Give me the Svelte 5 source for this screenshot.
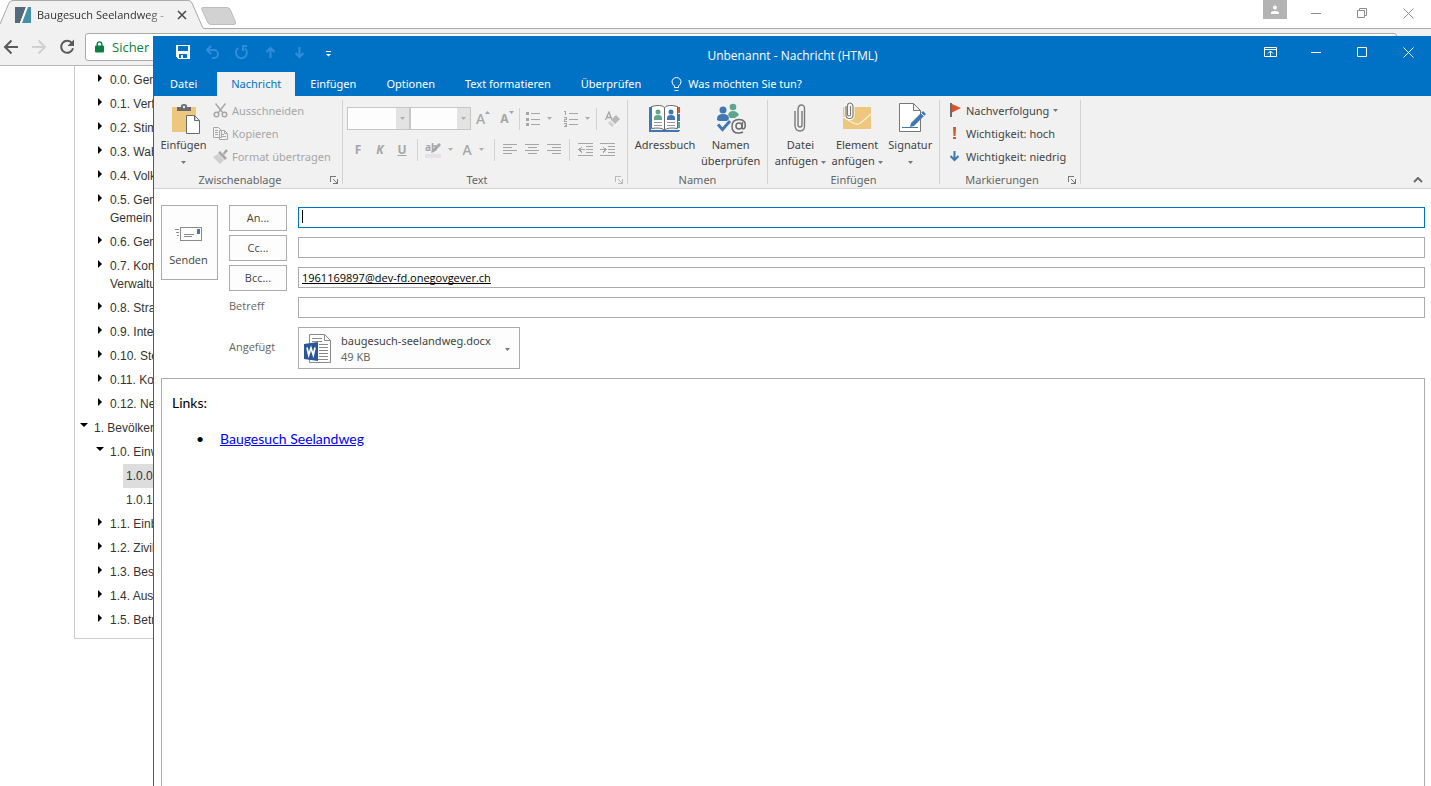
<script>
    const tree = [
        { level: 1, state: 'closed', lines: ['0.0. Gem'] },
        { level: 1, state: 'closed', lines: ['0.1. Verf'] },
        { level: 1, state: 'closed', lines: ['0.2. Stim'] },
        { level: 1, state: 'closed', lines: ['0.3. Wahl'] },
        { level: 1, state: 'closed', lines: ['0.4. Volk'] },
        { level: 1, state: 'closed', lines: ['0.5. Gem', 'Gemein'] },
        { level: 1, state: 'closed', lines: ['0.6. Gem'] },
        { level: 1, state: 'closed', lines: ['0.7. Kom', 'Verwaltu'] },
        { level: 1, state: 'closed', lines: ['0.8. Stra'] },
        { level: 1, state: 'closed', lines: ['0.9. Inte'] },
        { level: 1, state: 'closed', lines: ['0.10. Ste'] },
        { level: 1, state: 'closed', lines: ['0.11. Ko'] },
        { level: 1, state: 'closed', lines: ['0.12. Ne'] },
        { level: 0, state: 'open', lines: ['1. Bevölker'] },
        { level: 1, state: 'open', lines: ['1.0. Einw'] },
        { level: 2, state: 'active', lines: ['1.0.0'] },
        { level: 2, state: '', lines: ['1.0.1'] },
        { level: 1, state: 'closed', lines: ['1.1. Einb'] },
        { level: 1, state: 'closed', lines: ['1.2. Zivil'] },
        { level: 1, state: 'closed', lines: ['1.3. Bes'] },
        { level: 1, state: 'closed', lines: ['1.4. Aus'] },
        { level: 1, state: 'closed', lines: ['1.5. Betr'] }
    ]

    const tabs = ['Einfügen', 'Optionen', 'Text formatieren', 'Überprüfen']

    let to = $state('')
    let cc = $state('')
    let bcc = $state('1961169897@dev-fd.onegovgever.ch')
    let subject = $state('')
</script>

{#snippet arrow()}
    <svg class="arrow" width="5" height="3" viewBox="0 0 5 3"><path d="M0 0h5L2.5 3z" fill="currentColor" /></svg>
{/snippet}

{#snippet launcher(label)}
    <button class="launcher" aria-label={label}>
        <svg width="8" height="8" viewBox="0 0 8 8" fill="none" stroke="currentColor" shape-rendering="crispEdges">
            <path d="M0.5 6V0.5H6M3 3l4 4M7.5 3v4.5H3" />
        </svg>
    </button>
{/snippet}

{#snippet lines(d)}
    <svg width="15" height="14" viewBox="0 0 15 14" fill="none" stroke="#a6a6a6" shape-rendering="crispEdges">
        <path {d} />
    </svg>
{/snippet}

<div class="browser">
    <div class="tabstrip">
        <div class="chrome-tab">
            <svg class="shape" width="204" height="29" viewBox="0 0 204 29">
                <path d="M0 29V24L9 3Q10 0.5 13 0.5H188Q191 0.5 192 3L202 26Q203 28.5 204 28.5V29z" fill="#f2f1f1" />
                <path d="M0 24L9 3Q10 0.5 13 0.5H188Q191 0.5 192 3L202 26Q203 28.5 204 28.5" fill="none" stroke="#a9a9a9" />
            </svg>
            <svg class="favicon" width="16" height="16" viewBox="0 0 16 16">
                <path d="M0 0H11L5 16H0z" fill="#56697b" />
                <path d="M12 0H16V16H6z" fill="#4390ad" />
                <path d="M11 0h2L7 16H5z" fill="#fff" />
            </svg>
            <span class="tab-title">Baugesuch Seelandweg -</span>
            <button aria-label="Tab schliessen">
                <svg width="10" height="10" viewBox="0 0 10 10" stroke="#4a4a4a" stroke-width="1.6"><path d="M1 1l8 8M9 1L1 9" /></svg>
            </button>
        </div>
        <button class="new-tab" aria-label="Neuer Tab">
            <svg width="36" height="18" viewBox="0 0 36 18"><path d="M2 0.5H26Q28 0.5 29 2L34.5 15Q35 17.5 33 17.5H10Q8 17.5 7 16L1 3Q0 0.5 2 0.5z" fill="#d2d2d2" stroke="#bdbdbd" /></svg>
        </button>
        <div class="chrome-controls">
            <button class="profile" aria-label="Profil">
                <svg width="10" height="10" viewBox="0 0 10 10" fill="#fff"><circle cx="5" cy="2.5" r="2" /><path d="M1 9V8Q1 6 5 6T9 8V9z" /></svg>
            </button>
            <button aria-label="Minimieren"><svg width="11" height="11" viewBox="0 0 11 11" stroke="#8c8c8c"><path d="M0 5.5h10" /></svg></button>
            <button aria-label="Verkleinern">
                <svg width="11" height="11" viewBox="0 0 11 11" fill="none" stroke="#8c8c8c"><path d="M0.5 2.5h7v7h-7zM2.5 2V0.5h7v7H8" /></svg>
            </button>
            <button aria-label="Schliessen"><svg width="11" height="11" viewBox="0 0 11 11" stroke="#8c8c8c"><path d="M0.5 0.5l10 10M10.5 0.5l-10 10" /></svg></button>
        </div>
    </div>

    <div class="toolbar">
        <button aria-label="Zurück">
            <svg width="16" height="16" viewBox="0 0 16 16" fill="none" stroke="#5a5a5a" stroke-width="2"><path d="M15 8H3M8.5 1.5L2 8l6.500 6.500" /></svg>
        </button>
        <button aria-label="Vorwärts">
            <svg width="16" height="16" viewBox="0 0 16 16" fill="none" stroke="#d0d0d0" stroke-width="2"><path d="M1 8H13M7.500 1.500L14 8l-6.500 6.500" /></svg>
        </button>
        <button aria-label="Neu laden">
            <svg width="16" height="16" viewBox="0 0 16 16"><path d="M13 4.200A6 6 0 1 0 14 9.200" fill="none" stroke="#5a5a5a" stroke-width="2" /><path d="M15 0.500V7H8.500z" fill="#5a5a5a" /></svg>
        </button>
        <label class="address">
            <svg width="9" height="12" viewBox="0 0 9 12"><path d="M2.200 5V3.200a2.300 2.300 0 0 1 4.600 0V5" fill="none" stroke="#0b8043" stroke-width="1.400" /><rect y="4.500" width="9" height="7" rx="1" fill="#0b8043" /></svg>
            <span>Sicher</span>
            <input type="text" aria-label="Adresse" />
        </label>
    </div>

    <div class="page">
        <ul class="tree">
            {#each tree as item}
                <li class="level{item.level} {item.state}">
                    {#if item.state === 'closed'}
                        <svg class="marker" width="6" height="8" viewBox="0 0 6 8"><path d="M1 0l4 4-4 4z" /></svg>
                    {:else if item.state === 'open'}
                        <svg class="marker" width="8" height="6" viewBox="0 0 8 6"><path d="M0 1h8L4 5z" /></svg>
                    {/if}
                    <a href="#position">{#each item.lines as line}<span>{line}</span>{/each}</a>
                </li>
            {/each}
        </ul>
    </div>
</div>

<main class="outlook">
    <header class="titlebar">
        <div class="quick">
            <button aria-label="Speichern">
                <svg width="15" height="15" viewBox="0 0 15 15" shape-rendering="crispEdges"><path d="M0 0H14V14H2L0 12zM2 1V6H12V1zM3 9V13H5V10H7V13H11V9z" fill="#fff" fill-rule="evenodd" /></svg>
            </button>
            <button disabled aria-label="Rückgängig">
                <svg width="15" height="15" viewBox="0 0 15 15" fill="none" stroke="#2f8dda" stroke-width="2"><path d="M6 1L2 5l4 4M2 5H9a4 4 0 0 1 0 8H7" /></svg>
            </button>
            <button disabled aria-label="Wiederholen">
                <svg width="15" height="15" viewBox="0 0 15 15" fill="none" stroke="#2f8dda" stroke-width="2"><path d="M4.500 3A5.500 5.500 0 1 0 11 3.500M8 1h5M9 1v5" /></svg>
            </button>
            <button disabled aria-label="Vorheriges Element">
                <svg width="15" height="15" viewBox="0 0 15 15" fill="none" stroke="#2f8dda" stroke-width="2"><path d="M7.500 13V3M3.500 7l4-4 4 4" /></svg>
            </button>
            <button disabled aria-label="Nächstes Element">
                <svg width="15" height="15" viewBox="0 0 15 15" fill="none" stroke="#2f8dda" stroke-width="2"><path d="M7.500 2V12M3.500 8l4 4 4-4" /></svg>
            </button>
            <button aria-label="Schnellzugriff anpassen">
                <svg width="15" height="15" viewBox="0 0 15 15" fill="#fff"><path d="M5 6h5v1H5zM5 9h5L7.500 11.500z" /></svg>
            </button>
        </div>
        <h1>Unbenannt - Nachricht (HTML)</h1>
        <div class="controls">
            <button aria-label="Menüband-Anzeigeoptionen">
                <svg width="13" height="11" viewBox="0 0 13 11" fill="none" stroke="#fff"><path d="M0.500 0.500h12v9h-12zM0 2.500h13M6.500 9V4M4 6.500l2.500-2.500L9 6.500" /></svg>
            </button>
            <button aria-label="Minimieren"><svg width="11" height="11" viewBox="0 0 11 11" stroke="#fff"><path d="M0 5.500h10" /></svg></button>
            <button aria-label="Maximieren"><svg width="11" height="11" viewBox="0 0 11 11" fill="none" stroke="#fff"><path d="M0.500 0.500h9v9h-9z" /></svg></button>
            <button aria-label="Schliessen"><svg width="11" height="11" viewBox="0 0 11 11" stroke="#fff"><path d="M0.500 0.500l10 10M10.500 0.500l-10 10" /></svg></button>
        </div>
    </header>

    <nav class="tabs">
        <button class="file">Datei</button>
        <button class="selected">Nachricht</button>
        {#each tabs as tab}
            <button>{tab}</button>
        {/each}
        <button class="tell-me">
            <svg width="11" height="15" viewBox="0 0 11 15" fill="none" stroke="#fff"><path d="M3.500 10.500V9Q1 7 1 5a4.500 4.500 0 0 1 9 0Q10 7 7.500 9v1.500zM3.500 13.500h4" /></svg>
            Was möchten Sie tun?
        </button>
    </nav>

    <div class="ribbon">
        <section class="group clipboard">
            <div class="group-body">
                <button class="big">
                    <svg width="32" height="32" viewBox="0 0 32 32">
                        <path d="M4 5h24v25H4z" fill="#edc77d" />
                        <path d="M9 9V5h4V4q0-2 3-2t3 2v1h4v4z" fill="#6b6b6b" />
                        <circle cx="16" cy="5" r="1.200" fill="#f1f1f1" />
                        <path d="M18.500 13.500h8l5 5v13h-13zM26.500 13.500v5h5" fill="#fff" stroke="#6b6b6b" />
                    </svg>
                    <span>Einfügen</span>
                    <span>{@render arrow()}</span>
                </button>
                <div class="stack disabled">
                    <button disabled>
                        <svg width="15" height="15" viewBox="0 0 15 15" fill="none" stroke="#a8a8a8" stroke-width="1.500"><path d="M2.500 0.500l7.500 9.500M12.500 0.500L5 10" /><circle cx="3.500" cy="11.500" r="2.300" /><circle cx="11.500" cy="11.500" r="2.300" /></svg>
                        Ausschneiden
                    </button>
                    <button disabled>
                        <svg width="15" height="15" viewBox="0 0 15 15" fill="#f1f1f1" stroke="#a8a8a8"><path d="M0.500 1.500h5l3 3v7h-8zM2 4.500h3M2 6.500h3M2 8.500h3M6.500 4.500h5l3 3v6h-8zM11.500 4.500v3h3M8 8.500h3M8 10.500h5" /></svg>
                        Kopieren
                    </button>
                    <button disabled>
                        <svg width="15" height="15" viewBox="0 0 15 15"><path d="M0 8l5-3 6 6-4 4z" fill="#cfcfcf" /><path d="M5 4l2-2 7 7-2 2zM10 4l3-4 2 2-4 4z" fill="#a8a8a8" /></svg>
                        Format übertragen
                    </button>
                </div>
            </div>
            <footer><h2>Zwischenablage</h2>{@render launcher('Zwischenablage öffnen')}</footer>
        </section>
        <hr />

        <section class="group text">
            <div class="group-body format">
                <div class="tools">
                    <span class="combo font-name"><select disabled aria-label="Schriftart"></select><i>{@render arrow()}</i></span>
                    <span class="combo"><select disabled aria-label="Schriftgrad"></select><i>{@render arrow()}</i></span>
                    <button disabled class="wide" aria-label="Schriftgrad vergrössern"><b class="large">A</b><svg class="raised" width="5" height="3" viewBox="0 0 5 3" fill="#a6a6a6"><path d="M0 3h5L2.500 0z" /></svg></button>
                    <button disabled class="wide" aria-label="Schriftgrad verkleinern"><b>A</b><svg class="raised" width="5" height="3" viewBox="0 0 5 3" fill="#a6a6a6"><path d="M0 0h5L2.500 3z" /></svg></button>
                    <hr />
                    <button disabled class="split" aria-label="Aufzählungszeichen">
                        <svg width="14" height="14" viewBox="0 0 14 14" stroke="#a6a6a6" shape-rendering="crispEdges"><path d="M5 1.500h9M5 7.500h9M5 12.500h9" /><path d="M0 1.500h3M0 7.500h3M0 12.500h3" stroke-width="3" /></svg>
                        {@render arrow()}
                    </button>
                    <button disabled class="split" aria-label="Nummerierung">
                        <svg width="14" height="16" viewBox="0 0 14 16" fill="none" stroke="#a6a6a6" shape-rendering="crispEdges"><path d="M5 2.500h9M5 8.500h9M5 13.500h9M0 0.500h1.500V4M0 6.500h2.500v2h-2v2H3M0 12.500h2.500v3H0M1 14h2" /></svg>
                        {@render arrow()}
                    </button>
                    <hr />
                    <button disabled class="clear" aria-label="Formatierung löschen">
                        <svg width="15" height="16" viewBox="0 0 15 16" fill="none"><path d="M0.500 9L4 1l3 8M2 6.500h4" stroke="#a6a6a6" stroke-width="1.300" /><path d="M11 4l4 4-5 5-4-4z" fill="#b8b8b8" /><path d="M5 10l4 4-2 2-4-4z" fill="#cfcfcf" /></svg>
                    </button>
                </div>
                <div class="tools second">
                    <button disabled class="letter"><b>F</b></button>
                    <button disabled class="letter"><b><em>K</em></b></button>
                    <button disabled class="letter"><b><u>U</u></b></button>
                    <hr />
                    <button disabled class="split" aria-label="Texthervorhebungsfarbe">
                        <span class="marker-icon">ab<svg width="16" height="16" viewBox="0 0 16 16"><path d="M14 1l2 2-7 7-3 1 1-3z" fill="#a6a6a6" /><path d="M0 12h16v4H0z" fill="#e6e0ea" /></svg></span>
                        {@render arrow()}
                    </button>
                    <button disabled class="split" aria-label="Schriftfarbe"><b class="large">A</b>{@render arrow()}</button>
                    <hr />
                    <button disabled class="letter" aria-label="Linksbündig">{@render lines('M0 1.5h14M0 4.5h9M0 7.5h14M0 10.5h9')}</button>
                    <button disabled class="letter" aria-label="Zentriert">{@render lines('M0 1.5h14M3 4.5h9M0 7.5h14M3 10.5h9')}</button>
                    <button disabled class="letter" aria-label="Rechtsbündig">{@render lines('M0 1.5h14M5 4.5h9M0 7.5h14M5 10.5h9')}</button>
                    <hr />
                    <button disabled class="letter" aria-label="Einzug verkleinern">{@render lines('M0 0.5h15M8 3.5h7M8 6.5h7M8 9.5h7M0 12.5h15M1 6.5h6M4 4L1 6.5l3 3')}</button>
                    <button disabled class="letter" aria-label="Einzug vergrössern">{@render lines('M0 0.5h15M8 3.5h7M8 6.5h7M8 9.5h7M0 12.5h15M0 6.5h6M3 4l3 2.5L3 9.500')}</button>
                </div>
            </div>
            <footer class="faded"><h2>Text</h2>{@render launcher('Text öffnen')}</footer>
        </section>
        <hr />

        <section class="group names">
            <div class="group-body">
                <button class="big">
                    <svg width="32" height="32" viewBox="0 0 32 32">
                        <path d="M0 5h2v23h29v1H0zM0 28h30v2H0z" fill="#3f78b4" />
                        <path d="M28 5h3v6h-3z" fill="#d9532c" /><path d="M28 12h3v7h-3z" fill="#3f78b4" /><path d="M28 20h3v6h-3z" fill="#5fa58c" />
                        <path d="M2.500 4.500Q12 2 15.500 5.500Q19 2 28.500 4.500V26.500Q19 25 15.500 28Q12 25 2.500 26.500zM15.500 5.500V28" fill="#fff" stroke="#6b6b6b" />
                        <path d="M5 20.500h8M5 23.500h8M18 20.500h8M18 23.500h8" stroke="#9a9a9a" />
                        <circle cx="9" cy="10" r="2.500" fill="#5fa58c" /><path d="M5 18v-2q0-3 4-3t4 3v2z" fill="#5fa58c" />
                        <circle cx="22" cy="10" r="2.500" fill="#3f78b4" /><path d="M18 18v-2q0-3 4-3t4 3v2z" fill="#3f78b4" />
                    </svg>
                    <span>Adressbuch</span>
                </button>
                <button class="big">
                    <svg width="32" height="32" viewBox="0 0 32 32">
                        <circle cx="18" cy="5" r="3.300" fill="#5fa58c" /><path d="M13 13q1-4 5-4t6 4l-4 3h-5z" fill="#5fa58c" />
                        <circle cx="8" cy="8" r="3.500" fill="#3f78b4" /><path d="M2 18v-1q0-5 6-5t6 5l-2 2H4z" fill="#3f78b4" />
                        <path d="M3 22.500l4.500 5L15 19" fill="none" stroke="#3f78b4" stroke-width="3" />
                        <circle cx="24" cy="24" r="3" fill="none" stroke="#6b6b6b" stroke-width="1.500" />
                        <path d="M27.500 20l-0.500 6q1 2 3-0.500 1.500-8-6-8-7 0-7 7t7 6.500q2 0 4-1" fill="none" stroke="#6b6b6b" stroke-width="1.500" />
                    </svg>
                    <span>Namen</span>
                    <span>überprüfen</span>
                </button>
            </div>
            <footer><h2>Namen</h2></footer>
        </section>
        <hr />

        <section class="group insert">
            <div class="group-body">
                <button class="big">
                    <svg width="32" height="32" viewBox="0 0 32 32" fill="none" stroke="#7a7a7a" stroke-width="1.400"><path d="M18 9v14q0 2-2 2t-2-2V8q0-5 3.500-5T20.500 8v16q0 5-4.500 5t-5-5V9" /></svg>
                    <span>Datei</span>
                    <span>anfügen {@render arrow()}</span>
                </button>
                <button class="big">
                    <svg width="32" height="32" viewBox="0 0 32 32" fill="none"><path d="M2 5h28v22H2z" fill="#edc77d" /><path d="M2 15l11 6.500q3 1.500 6 0L30 12" stroke="#faf0dc" stroke-width="1.300" /><path d="M9.500 4v8.500q0 1.500-1.500 1.500t-1.500-1.500V4Q6.500 1 9 1t3 3v9q0 3.500-3.500 3.500T5 13V4" stroke="#fff" stroke-width="3" /><path d="M9.500 4v8.500q0 1.500-1.500 1.500t-1.500-1.500V4Q6.500 1 9 1t3 3v9q0 3.500-3.500 3.500T5 13V4" stroke="#7a7a7a" stroke-width="1.200" /></svg>
                    <span>Element</span>
                    <span>anfügen {@render arrow()}</span>
                </button>
                <button class="big">
                    <svg width="32" height="32" viewBox="0 0 32 32"><path d="M5.500 1.500h14l7 7v21h-21zM19.500 1.500v7h7" fill="#fff" stroke="#777" /><path d="M8 25.500h16" stroke="#3f78b4" /><path d="M29 9l3 3-12 12-4 1 1-4z" fill="#3f78b4" /><path d="M27 11l3 3" stroke="#fff" /></svg>
                    <span>Signatur</span>
                    <span>{@render arrow()}</span>
                </button>
            </div>
            <footer><h2>Einfügen</h2></footer>
        </section>
        <hr />

        <section class="group marks">
            <div class="group-body">
                <div class="stack">
                    <button>
                        <svg width="13" height="15" viewBox="0 0 13 15"><path d="M1 0h2v14H1z" fill="#6b6b6b" /><path d="M3 1l9 4-9 4.500z" fill="#d9532c" /></svg>
                        Nachverfolgung {@render arrow()}
                    </button>
                    <button>
                        <svg width="13" height="15" viewBox="0 0 13 15" fill="#d9532c"><path d="M4 1h3L6.500 10h-2zM4 11h3v2H4z" /></svg>
                        Wichtigkeit: hoch
                    </button>
                    <button>
                        <svg width="13" height="15" viewBox="0 0 13 15" fill="none" stroke="#3f78b4" stroke-width="2"><path d="M5.500 2v9M1.500 7l4 4 4-4" /></svg>
                        Wichtigkeit: niedrig
                    </button>
                </div>
            </div>
            <footer><h2>Markierungen</h2>{@render launcher('Markierungen öffnen')}</footer>
        </section>
        <hr />

        <button class="collapse" aria-label="Menüband reduzieren">
            <svg width="10" height="6" viewBox="0 0 10 6" fill="none" stroke="#6b6b6b" stroke-width="2"><path d="M1 5l4-4 4 4" /></svg>
        </button>
    </div>

    <form class="envelope">
        <button type="button" class="send">
            <svg width="28" height="16" viewBox="0 0 28 16" fill="none" stroke="#8a8a8a" shape-rendering="crispEdges">
                <path d="M5.500 1.500h21v13h-21zM0 3.500h4M1 6.500h3M2 9.500h2M9 8.500h10M9 10.500h8" /><path d="M22 3h3v5h-3z" fill="#3f78b4" stroke="none" />
            </svg>
            Senden
        </button>
        <div class="fields">
            <button type="button">An...</button>
            <div class="entry">
                <input class="focused" type="text" aria-label="An" bind:value={to} />
                <span class="caret"></span>
            </div>
            <button type="button">Cc...</button>
            <div class="entry"><input type="text" aria-label="Cc" bind:value={cc} /></div>
            <button type="button">Bcc...</button>
            <div class="entry"><input class="recipient" type="text" aria-label="Bcc" bind:value={bcc} /></div>
            <label for="subject">Betreff</label>
            <div class="entry"><input id="subject" type="text" bind:value={subject} /></div>
            <span class="attached">Angefügt</span>
            <button type="button" class="attachment">
                <svg width="28" height="32" viewBox="0 0 28 32">
                    <path d="M5.500 1.500h15l6 6v22h-21zM20.500 1.500v6h6" fill="#fff" stroke="#8a8a8a" />
                    <path d="M8 5.500h10M8 8.500h10M15 11.500h9M15 14.500h9M15 17.500h9M15 20.500h9M15 23.500h9M8 26.500h16" stroke="#8a8a8a" />
                    <path d="M0 11l14-2v19L0 26z" fill="#2b579a" />
                    <path d="M3 14.500l1.700 7.500 2.300-7 2.300 7 1.700-7.500" fill="none" stroke="#fff" stroke-width="1.700" />
                </svg>
                <span class="file-info"><span>baugesuch-seelandweg.docx</span><small>49 KB</small></span>
                {@render arrow()}
            </button>
        </div>
    </form>

    <article class="message">
        <p>Links:</p>
        <ul>
            <li><a href="#baugesuch">Baugesuch Seelandweg</a></li>
        </ul>
    </article>
</main>

<style>
    :global(body) {
        margin: 0;
        overflow: hidden;
        background: #fff;
        font: 12px/16px "Open Sans", "Noto Sans", sans-serif;
        color: #444;
    }

    button {
        padding: 0;
        border: 0;
        background: none;
        font: inherit;
        color: inherit;
        display: flex;
        align-items: center;
        justify-content: center;
        white-space: nowrap;
    }

    svg {
        flex: none;
        display: block;
    }

    h1, h2 {
        margin: 0;
        font: inherit;
    }

    input {
        box-sizing: border-box;
        font: inherit;
    }

    /* browser behind the mail window */
    .browser {
        height: 100vh;
        overflow: hidden;
    }

    .tabstrip {
        display: flex;
        height: 28px;
        border-bottom: 1px solid #a9a9a9;
    }

    .chrome-tab {
        position: relative;
        width: 204px;
        height: 29px;
        display: flex;
        align-items: center;
        gap: 6px;
        padding-left: 15px;
        box-sizing: border-box;
        color: #333;
    }

    .shape {
        position: absolute;
        left: 0;
        top: 0;
    }

    .favicon, .tab-title, .chrome-tab button {
        position: relative;
    }

    .tab-title {
        width: 134px;
        font-size: 11px;
        white-space: nowrap;
        mask-image: linear-gradient(to right, #000 110px, transparent 140px);
    }

    .new-tab {
        align-self: center;
        margin-left: -3px;
        padding-top: 3px;
    }

    .chrome-controls {
        margin-left: auto;
        display: flex;
    }

    .chrome-controls button {
        width: 46px;
        height: 26px;
    }

    .chrome-controls .profile {
        width: 24px;
        height: 19px;
        margin-right: 6px;
        background: #b3b3b3;
    }

    .toolbar {
        display: flex;
        align-items: center;
        gap: 12px;
        height: 36px;
        padding: 0 34px 0 3px;
        background: #f2f1f1;
        border-bottom: 1px solid #b6b6b6;
    }

    .address {
        flex: 1;
        display: flex;
        align-items: center;
        gap: 8px;
        height: 26px;
        margin-left: -2px;
        padding-left: 9px;
        border: 1px solid #a9a9a9;
        border-radius: 3px;
        background: #fff;
        color: #0b8043;
        font-size: 13px;
    }

    .address input {
        flex: 1;
        border: 0;
        outline: 0;
    }

    .page {
        padding-left: 74px;
        font: 12px/18px "Liberation Sans", Arial, sans-serif;
    }

    .tree {
        list-style: none;
        width: 240px;
        margin: 0;
        padding: 2px 0 6px;
        border: 1px solid #ccc;
        border-top: 0;
    }

    .tree li {
        position: relative;
        padding: 3px;
    }

    .tree a {
        color: #333;
        text-decoration: none;
    }

    .tree span {
        display: block;
    }

    .level0 {
        margin-left: 16px;
    }

    .level1 {
        margin-left: 32px;
    }

    .level2 {
        margin-left: 48px;
    }

    .active {
        background: #ddd;
    }

    .marker {
        position: absolute;
        left: -11px;
        top: 6px;
    }

    .closed .marker {
        left: -10px;
    }

    /* mail window */
    .outlook {
        position: absolute;
        top: 36px;
        left: 153px;
        right: 0;
        bottom: 0;
        display: flex;
        flex-direction: column;
        border-left: 1px solid #0072c6;
        background: #fff;
    }

    .titlebar {
        display: grid;
        grid-template-columns: 1fr auto 1fr;
        background: #0072c6;
        color: #fff;
        height: 36px;
    }

    .titlebar h1 {
        padding-top: 12px;
    }

    .quick {
        display: flex;
        padding-left: 15px;
    }

    .quick button {
        width: 29px;
        height: 32px;
    }

    .controls {
        display: flex;
        justify-content: flex-end;
    }

    .controls button {
        width: 46px;
        height: 32px;
    }

    .tabs, .ribbon, .attachment {
        font-family: "Noto Sans", "Open Sans", sans-serif;
        font-size: 11px;
    }

    .tabs {
        display: flex;
        height: 24px;
        background: #0072c6;
        color: #fff;
    }

    .tabs button {
        padding: 0 15px;
    }

    .tabs .file {
        padding: 0 20px 0 16px;
    }

    .tabs .selected {
        padding: 0 14px;
        background: #f1f1f1;
        color: #0072c6;
    }

    .tabs .tell-me {
        gap: 6px;
    }

    .ribbon {
        display: flex;
        background: #f1f1f1;
        border-bottom: 1px solid #d2d2d2;
    }

    .ribbon hr {
        flex: none;
        width: 1px;
        margin: 4px 0;
        border: 0;
        background: #d2d2d2;
    }

    .group {
        flex: none;
        display: flex;
        flex-direction: column;
    }

    .clipboard {
        width: 188px;
    }

    .text {
        width: 284px;
    }

    .names {
        width: 139px;
    }

    .insert {
        width: 171px;
    }

    .marks {
        width: 140px;
    }

    .group-body {
        display: flex;
        height: 76px;
    }

    .group footer {
        display: flex;
        height: 16px;
        color: #666;
    }

    .group h2 {
        flex: 1;
        text-align: center;
    }

    .launcher {
        width: 16px;
        color: #777;
    }

    .faded .launcher {
        color: #b8b8b8;
    }

    .arrow {
        display: inline-block;
        vertical-align: middle;
        color: #777;
    }

    .big {
        flex: 1 1 auto;
        flex-direction: column;
        justify-content: flex-start;
        padding-top: 6px;
        align-self: flex-start;
    }

    .big > svg {
        margin-bottom: 3px;
    }

    .names .group-body, .insert .group-body {
        padding: 0 4px;
    }

    .clipboard .big {
        flex: none;
        width: 59px;
    }

    .stack {
        display: flex;
        flex-direction: column;
        padding-top: 3px;
    }

    .stack button {
        height: 23px;
        gap: 4px;
        justify-content: flex-start;
    }

    .marks .stack {
        padding-left: 9px;
    }

    .disabled {
        color: #a6a6a6;
    }

    .format {
        flex-direction: column;
        gap: 8px;
        padding: 11px 0 0 4px;
        box-sizing: border-box;
    }

    .tools {
        display: flex;
        align-items: center;
        height: 23px;
        color: #a6a6a6;
    }

    .tools hr {
        height: 22px;
        margin: 0;
    }

    .second hr {
        margin: 0 4px;
    }

    .tools .arrow {
        color: #b0b0b0;
    }

    .tools b {
        font-size: 12px;
    }

    .tools .large {
        font-size: 14px;
        font-weight: 500;
    }

    .combo {
        display: flex;
        width: 61px;
        height: 23px;
        box-sizing: border-box;
        border: 1px solid #c6c6c6;
        background: #fdfdfd;
    }

    .font-name {
        width: 63px;
    }

    .combo select {
        flex: 1;
        min-width: 0;
        appearance: none;
        border: 0;
        background: none;
    }

    .combo i {
        display: flex;
        align-items: center;
        justify-content: center;
        width: 13px;
        background: #e3e3e3;
    }

    .wide {
        width: 24px;
    }

    .clear {
        width: 30px;
    }

    .split {
        width: 38px;
        gap: 7px;
    }

    .second .split {
        width: 34px;
    }

    .letter {
        width: 22px;
    }

    .raised {
        align-self: flex-start;
    }

    .marker-icon {
        position: relative;
        width: 16px;
        height: 16px;
        font-weight: bold;
        font-size: 10px;
        line-height: 10px;
        text-align: left;
    }

    .marker-icon svg {
        position: absolute;
        top: 0;
        left: 0;
    }

    .collapse {
        margin: auto 8px 5px auto;
    }

    .envelope {
        display: flex;
        align-items: flex-start;
        gap: 11px;
        padding: 16px 6px 0 7px;
    }

    .send, .fields > button {
        box-sizing: border-box;
        border: 1px solid #ababab;
        background: #fdfdfd;
        font-size: 11px;
    }

    .send {
        flex: none;
        flex-direction: column;
        gap: 10px;
        width: 57px;
        height: 75px;
        padding-top: 8px;
        padding-right: 2px;
    }

    .fields {
        flex: 1;
        display: grid;
        grid-template-columns: 58px 1fr;
        gap: 4px 11px;
        font-size: 11px;
        color: #666;
    }

    .fields > button {
        height: 26px;
        color: #444;
    }

    .entry {
        position: relative;
        padding-top: 2px;
    }

    .entry input {
        display: block;
        width: 100%;
        height: 21px;
        padding: 0 4px;
        border: 1px solid #ababab;
        outline: 0;
        background: #fff;
        color: #000;
    }

    .entry .focused {
        border-color: #0072c6;
    }

    .entry .recipient {
        padding-left: 3px;
        text-decoration: underline;
        text-decoration-skip-ink: none;
    }

    .caret {
        position: absolute;
        left: 4px;
        top: 5px;
        width: 1px;
        height: 13px;
        background: #000;
    }

    .fields label {
        padding-top: 3px;
        height: 23px;
    }

    .attached {
        align-self: center;
    }

    .fields .attachment {
        justify-self: start;
        height: 42px;
        margin-top: 2px;
        padding: 2px 9px 0 5px;
        gap: 9px;
    }

    .attachment .arrow {
        margin-left: 5px;
    }

    .file-info {
        display: flex;
        flex-direction: column;
        text-align: left;
    }

    .file-info small {
        font-size: 11px;
        color: #666;
    }

    .message {
        flex: 1;
        margin: 9px 6px 0 7px;
        padding: 15px 10px;
        border: 1px solid #ababab;
        border-bottom: 0;
        font: 14px/18px Lato, "Open Sans", sans-serif;
        color: #000;
    }

    .message p {
        margin: 0 0 18px;
    }

    .message ul {
        list-style: none;
        margin: 0;
        padding-left: 24px;
    }

    .message li {
        display: flex;
    }

    .message li::before {
        content: "•";
        width: 24px;
    }

    .message a {
        color: #00f;
    }
</style>
